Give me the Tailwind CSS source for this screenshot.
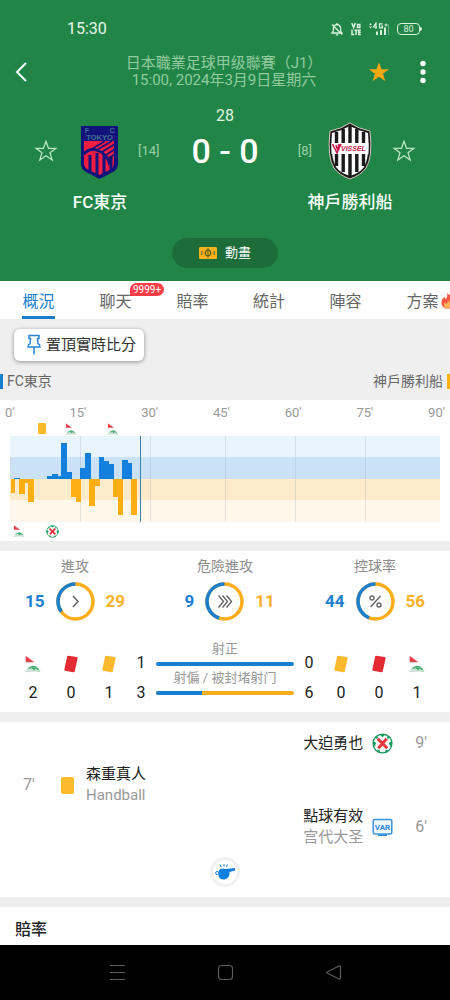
<!DOCTYPE html>
<html lang="zh-Hant">
<head>
<meta charset="utf-8">
<meta name="viewport" content="width=device-width, initial-scale=1">
<title>FC東京 - 神戶勝利船</title>
<script src="https://cdn.jsdelivr.net/npm/@tailwindcss/browser@4"></script>
</head>
<body class="flex min-h-screen flex-col bg-white font-['Roboto','Noto_Sans_CJK_TC',sans-serif] text-[#222]">

<!-- Shared icons -->
<svg width="0" height="0" class="absolute" aria-hidden="true">
  <symbol id="corner" viewBox="0 0 48 52">
    <path d="M2 1 28 21H2z" fill="#e3414c"/>
    <path d="M0 50 8 34 26 30 48 50z" fill="#dfe9e3"/>
    <path d="M9 42Q14 30 28 31q13 4 16 16l-12-7-6 6-5-7z" fill="#4fb27d"/>
    <path d="M2 50Q24 40 46 50" stroke="#9fd0b4" stroke-width="2" fill="none"/>
  </symbol>
  <symbol id="card" viewBox="0 0 13 17"><path d="M4 .8 12 2Q13 2.200 12.700 3.200L10 15.500Q9.700 16.400 8.700 16.200L.9 14.800Q0 14.600.2 13.700L2.800 1.600Q3 .7 4 .8z" fill="currentColor"/></symbol>
  <symbol id="miss" viewBox="0 0 20 20">
    <circle cx="10" cy="10" r="9" fill="#fff" stroke="#159a5c" stroke-width="1.200"/>
    <path d="M7 1.300h6L10 4zM1.200 7.500 4 9.500 2.600 13 1 11zM18.800 7.500 16 9.500l1.400 3.500L19 11zM4 16.500l3-.5 1 3zM16 16.500l-3-.5-1 3zM3 4l3-1-1 3zM17 4l-3-1 1 3z" fill="#159a5c"/>
    <path d="M5.500 5.500 14.500 14.500M14 5.500 6 14.500" stroke="#e5343c" stroke-width="2.800"/>
  </symbol>
  <symbol id="star" viewBox="0 0 24 24"><path d="M12 2.200 14.500 9.300H22L16 13.800 18.200 21 12 16.700 5.800 21 8 13.800 2 9.300H9.500z"/></symbol>
</svg>

<header class="bg-[#228548] text-white">
  <div class="flex h-[54px] items-center justify-between pt-1 pr-[28px] pl-[67px]">
    <span class="text-base leading-5 text-[#e6f8e9]">15:30</span>
    <div class="flex items-center gap-2 text-[#d9f2dd]">
      <svg class="h-3.5 w-3" viewBox="0 0 12 14" fill="none" stroke="currentColor" stroke-width="1.300"><path d="M1 11h10L9.600 9V6Q9.300 2.800 6 2.500 2.700 2.800 2.400 6v3zM6 2.500V1M4.800 12.800h2.400M1 2.500l10 10"/></svg>
      <svg class="h-3.5 w-2.5" viewBox="0 0 10 14" fill="none" stroke="currentColor" stroke-width="1.500" aria-label="VoLTE"><path d="M.8 1 2.600 5.500 4.400 1M6.500 2.500h2.300v3H6.500zM1 7.500V12.500H3.300M3.300 8.200H6.700M5 8.200V13M9.800 8.200H7.700v4.200h2.100M7.700 10.200h2"/></svg>
      <svg class="h-3.5 w-5" viewBox="0 0 20 14" fill="currentColor"><path d="M0 3 1.500 1 3 3zM0 4.500h3L1.500 6.500zM15.500 2.500h3v1h-3zM16.500 1.500h1v3h-1zM7 9.500h2V13H7zM11 8h2v5h-2zM15 5.500h2V13h-2z"/><path d="M7 7V1L4.500 5H8M13.500 1.800h-3v4h3V4H12" fill="none" stroke="currentColor" stroke-width="1.200"/><path d="M19.500 2v11" stroke="#76b58a" stroke-width=".8"/></svg>
      <span class="flex items-center"><span class="flex h-3 w-[23px] items-center justify-center rounded-[4px] border border-current text-[9px] leading-none">80</span><span class="h-1 w-0.5 rounded-r bg-current"></span></span>
    </div>
  </div>

  <div class="flex h-9 items-center justify-between pr-4 pl-3.5">
    <button type="button" aria-label="返回" class="w-20"><svg class="h-5 w-4" viewBox="0 0 16 20" fill="none" stroke="currentColor" stroke-width="2"><path d="M12 1 3 10l9 9"/></svg></button>
    <div class="text-center text-[15px] leading-[17px] whitespace-nowrap text-[#94cba0]"><h1 class="font-normal">日本職業足球甲级聯賽（J1）</h1><p>15:00, 2024年3月9日星期六</p></div>
    <div class="flex w-20 items-center justify-end gap-[21px]">
      <button type="button" aria-label="已收藏"><svg class="h-6 w-6 fill-[#fca90f]"><use href="#star"/></svg></button>
      <button type="button" aria-label="更多"><svg class="h-6 w-[22px]" viewBox="0 0 22 24" fill="currentColor"><circle cx="11" cy="3.500" r="2.700"/><circle cx="11" cy="12" r="2.700"/><circle cx="11" cy="20.500" r="2.700"/></svg></button>
    </div>
  </div>

  <p class="pt-5 text-center text-base leading-3 text-[#e2f5e5]">28</p>
  <div class="grid grid-cols-[minmax(0,4fr)_minmax(0,1fr)_minmax(0,4fr)] items-center">
    <div class="grid grid-cols-[1fr_44px_1fr] items-center gap-4">
      <button type="button" aria-label="收藏 FC東京" class="justify-self-end pr-1"><svg class="h-6 w-6 fill-none stroke-[#bfe8c5] stroke-[1.200]"><use href="#star"/></svg></button>
      <svg class="h-[58px] w-11" viewBox="0 0 44 58" aria-label="FC TOKYO">
        <path d="M3 4h37v38q0 5-5 8l-13.500 7L8 50q-5-3-5-8z" fill="#12127c"/>
        <path d="M6 19h30v22q0 4-3 6l-11.500 6L9 47q-3-2-3-6z" fill="#f21e42"/>
        <path d="M14 27 27 19M19 28 34 19M24 30 37 22M28 33 37 27M31 36 37 32" stroke="#12127c" stroke-width="1.700"/>
        <path d="M6 32Q12 25 21 29t11 14M12 33v18M19 31v23M26 33v19M33 35v13" stroke="#12127c" stroke-width="3" fill="none"/>
        <g fill="#3f7293" font-family="Liberation Sans, sans-serif" font-weight="700" text-anchor="middle"><text x="9" y="11" font-size="7">F</text><text x="34" y="11" font-size="7">C</text><text x="21.500" y="18" font-size="7.500">TOKYO</text></g>
      </svg>
      <span class="text-[13px] text-[#9bcfa6]">[14]</span>
    </div>
    <p class="flex justify-center text-[34px] leading-[58px] font-medium whitespace-nowrap">0 - 0</p>
    <div class="grid grid-cols-[1fr_44px_1fr] items-center gap-4">
      <span class="justify-self-end text-[13px] text-[#9bcfa6]">[8]</span>
      <svg class="h-[58px] w-11" viewBox="0 0 44 58" aria-label="VISSEL">
        <path d="M22 1Q31 7 42 9q3 26-4 37-5 7-16 11Q11 53 6 46-1 35 2 9 13 7 22 1z" fill="#1a1a1a" stroke="#d8c6bd"/>
        <path d="M22 4Q31 9 40 11q2 23-4 34-4 6-14 9Q12 51 8 45 2 34 4 11 13 9 22 4z" fill="#fff"/>
        <path d="M8.500 10v34M15.200 7v43M22 4v50M28.800 7v43M35.500 10v34" stroke="#1a1a1a" stroke-width="3.400"/>
        <path d="M3.500 21h37v11h-37z" fill="#fff"/>
        <path d="M4.500 22 9 31 13 22M8 23l2 6 1-7" fill="none" stroke="#c5174b" stroke-width="1.600"/>
        <text x="13" y="29" font-family="Liberation Sans, sans-serif" font-size="7" font-weight="700" font-style="italic" fill="#c5174b">VISSEL</text>
      </svg>
      <button type="button" aria-label="收藏 神戶勝利船" class="justify-self-start pl-1"><svg class="h-6 w-6 fill-none stroke-[#bfe8c5] stroke-[1.200]"><use href="#star"/></svg></button>
    </div>
  </div>
  <div class="grid grid-cols-[4fr_1fr_4fr] pt-2 text-center text-[17px] leading-7 font-medium"><h2>FC東京</h2><span></span><h2>神戶勝利船</h2></div>
  <div class="flex justify-center pt-[22px] pb-[13px]">
    <button type="button" class="flex h-[30px] w-[106px] items-center justify-center gap-2 rounded-full bg-[#1d6d3b] text-[13px]">
      <svg class="h-3.5 w-[18px]" viewBox="0 0 18 14"><rect y="1" width="18" height="12" rx="1" fill="#fcb01a"/><path d="M9 2v10M2.800 5v4M15.200 5v4" stroke="#59631d"/><circle cx="9" cy="7" r="2.800" fill="none" stroke="#59631d" stroke-width="1.200"/></svg>動畫
    </button>
  </div>
</header>

<main class="flex-1 bg-[#efefef]">
  <nav class="flex h-[38px] overflow-hidden bg-white text-base text-[#666]">
    <button type="button" class="flex w-[77px] shrink-0 flex-col items-center justify-between pt-[9px] text-[#1d80cf]"><span class="leading-6">概況</span><span class="h-[3px] w-[33px] bg-[#1d80cf]"></span></button>
    <button type="button" class="relative w-[77px] shrink-0 pt-[3px]">聊天<span class="absolute top-0.5 left-[53px] rounded-full rounded-bl-none bg-[#fd3e49] px-[3px] text-[10px] leading-[13px] text-white">9999+</span></button>
    <button type="button" class="w-[77px] shrink-0 pt-[3px]">賠率</button>
    <button type="button" class="w-[76px] shrink-0 pt-[3px]">統計</button>
    <button type="button" class="w-[77px] shrink-0 pt-[3px]">陣容</button>
    <button type="button" class="relative w-[77px] shrink-0 pt-[3px]">方案<svg class="absolute top-3 left-[57px] h-4 w-3.5" viewBox="0 0 14 16"><path d="M6 0q5 3 4 6l1.500-2Q14 7 14 10t-3 5.500H4Q0 13 .5 9T4 4q0 2 1 2 2-3 1-6z" fill="#f4553d"/><path d="M7 7q4 4 3 6.500T4 15Q1.500 12 4 9l1 2q2-1 2-4z" fill="#ffb257"/></svg></button>
  </nav>

  <div class="px-3.5 pt-2.5 pb-2">
    <button type="button" class="flex h-8 items-center gap-1 rounded-md bg-white pr-2 pl-3 text-[15px] text-[#333] shadow-[0_1px_4px_rgba(0,0,0,0.4)]">
      <svg class="h-[22px] w-4 shrink-0" viewBox="0 0 16 22" fill="none" stroke="#2d84d2" stroke-width="1.500"><path d="M3 1.500h10v3h-1.500l.5 5q2 1 2 3.500H2q0-2.500 2-3.500l.5-5H3zM8 13v7.500"/></svg>置頂實時比分
    </button>
  </div>
  <div class="flex h-6 items-center justify-between text-sm text-[#666]">
    <span class="flex items-center gap-1"><i class="h-[15px] w-[3px] bg-[#187ed0]"></i>FC東京</span>
    <span class="flex items-center gap-1">神戶勝利船<i class="h-[15px] w-[3px] bg-[#fdb010]"></i></span>
  </div>

  <section class="mt-[7px] bg-white pb-px">
    <div class="flex justify-between px-[5px] pt-1 text-[13px] leading-[17px] text-[#999]"><span>0'</span><span>15'</span><span>30'</span><span>45'</span><span>60'</span><span>75'</span><span>90'</span></div>
    <div class="flex h-[15px] items-center pl-[38px]"><i class="h-[11px] w-2 rounded-[1px] bg-[#fdba2d]"></i><svg class="ml-[19px] h-3 w-3"><use href="#corner"/></svg><svg class="ml-[30px] h-3 w-3"><use href="#corner"/></svg></div>
    <div class="px-2.5">
      <svg class="block h-[86px] w-full" viewBox="28 108 1292 258" preserveAspectRatio="none" shape-rendering="crispEdges">
        <path d="M28 108H1320v64H28z" fill="#e9f5fc"/><path d="M28 172H1320v65H28z" fill="#cbe2f6"/><path d="M28 237H1320v64H28z" fill="#fdebcb"/><path d="M28 301H1320v65H28z" fill="#fff7e9"/>
        <path d="M237 108h3v258h-3zM449 108h3v258h-3zM673 108h3v258h-3zM884 108h3v258h-3zM1095 108h3v258h-3z" fill="#8aa0b0" fill-opacity=".25"/>
        <path d="M41 237v-4h18v4zM140 237v-8h14v-7h18v6h10v-99h17v87h14v21zM238 237v-33h14v-45h18v78zM294 237v-65h17v11h14v10h15v44zM365 237v-58h17v10h14v48z" fill="#1480de"/>
        <path d="M30 237v42h14v-42zM55 237v45h17v-32h11v57h18v-70zM210 237v53h15v15h16v-68zM266 237v80h17v-60h15v-20zM337 237v54h14v54h17v-108zM393 237v108h17v-108z" fill="#fdae13"/>
        <path d="M420 108h3v258h-3z" fill="#3e7fad"/>
      </svg>
    </div>
    <div class="flex h-[18px] items-center pl-[13px]"><svg class="h-3 w-3"><use href="#corner"/></svg><svg class="ml-[21px] h-[13px] w-[13px]"><use href="#miss"/></svg></div>
  </section>

  <section class="mt-2.5 bg-white pt-[5px] pb-[7px]">
    <div class="grid grid-cols-3 text-center text-[17px] font-bold">
      <div><h3 class="text-sm leading-5 font-normal text-[#8c8c8c]">進攻</h3>
        <div class="mt-1.5 flex items-center justify-center gap-[11px]"><span class="text-[#1d7fd0]">15</span>
          <svg class="size-[39px]" viewBox="0 0 39 39" fill="none"><g stroke-width="3.500" transform="rotate(-90 19.500 19.500)"><circle cx="19.500" cy="19.500" r="17.500" stroke="#fbae1c"/><circle cx="19.500" cy="19.500" r="17.500" stroke="#1d7fcb" pathLength="100" stroke-dasharray="35 65" stroke-dashoffset="35"/></g><path d="M17 14l5 5.500-5 5.500" stroke="#666" stroke-width="1.500"/></svg>
          <span class="text-[#fbb02a]">29</span></div></div>
      <div><h3 class="text-sm leading-5 font-normal text-[#8c8c8c]">危險進攻</h3>
        <div class="mt-1.5 flex items-center justify-center gap-[11px]"><span class="w-[19px] text-right text-[#1d7fd0]">9</span>
          <svg class="size-[39px]" viewBox="0 0 39 39" fill="none"><g stroke-width="3.500" transform="rotate(-90 19.500 19.500)"><circle cx="19.500" cy="19.500" r="17.500" stroke="#fbae1c"/><circle cx="19.500" cy="19.500" r="17.500" stroke="#1d7fcb" pathLength="100" stroke-dasharray="45 55" stroke-dashoffset="45"/></g><path d="M13.500 13.500l5 6-5 6M17.500 13.500l5 6-5 6M21.500 13.500l5 6-5 6" stroke="#666" stroke-width="1.400"/></svg>
          <span class="text-[#fbb02a]">11</span></div></div>
      <div><h3 class="text-sm leading-5 font-normal text-[#8c8c8c]">控球率</h3>
        <div class="mt-1.5 flex items-center justify-center gap-[11px]"><span class="text-[#1d7fd0]">44</span>
          <svg class="size-[39px]" viewBox="0 0 39 39" fill="none"><g stroke-width="3.500" transform="rotate(-90 19.500 19.500)"><circle cx="19.500" cy="19.500" r="17.500" stroke="#fbae1c"/><circle cx="19.500" cy="19.500" r="17.500" stroke="#1d7fcb" pathLength="100" stroke-dasharray="44 56" stroke-dashoffset="44"/></g><g stroke="#666" stroke-width="1.400"><path d="M24.500 14 14.500 25"/><circle cx="16" cy="16" r="2"/><circle cx="23" cy="23" r="2"/></g></svg>
          <span class="text-[#fbb02a]">56</span></div></div>
    </div>

    <div class="mt-[18px] grid grid-cols-[38px_38px_38px_26px_minmax(0,1fr)_26px_38px_38px_38px] px-3.5 text-center text-base">
      <div class="flex flex-col items-center"><svg class="mt-4 h-[18px] w-4"><use href="#corner"/></svg><span class="mt-2 leading-6">2</span></div>
      <div class="flex flex-col items-center"><svg class="mt-4 h-[18px] w-[14px] text-[#e42a33]"><use href="#card"/></svg><span class="mt-2 leading-6">0</span></div>
      <div class="flex flex-col items-center"><svg class="mt-4 h-[18px] w-[14px] text-[#fcb92e]"><use href="#card"/></svg><span class="mt-2 leading-6">1</span></div>
      <div class="flex flex-col pt-3"><span class="leading-6">1</span><span class="mt-1.5 leading-6">3</span></div>
      <div class="px-0.5 text-[13px] leading-[18px] text-[#999]">
        <p class="pt-px">射正</p><div class="mt-1 h-1 rounded-full bg-[#187fd0]"></div>
        <p class="mt-[3px] whitespace-nowrap">射偏 / 被封堵射门</p><div class="mt-1 flex h-1 overflow-hidden rounded-full bg-[#fbae1c]"><i class="w-1/3 bg-[#187fd0]"></i></div>
      </div>
      <div class="flex flex-col pt-3"><span class="leading-6">0</span><span class="mt-1.5 leading-6">6</span></div>
      <div class="flex flex-col items-center"><svg class="mt-4 h-[18px] w-[14px] text-[#fcb92e]"><use href="#card"/></svg><span class="mt-2 leading-6">0</span></div>
      <div class="flex flex-col items-center"><svg class="mt-4 h-[18px] w-[14px] text-[#e42a33]"><use href="#card"/></svg><span class="mt-2 leading-6">0</span></div>
      <div class="flex flex-col items-center"><svg class="mt-4 h-[18px] w-4"><use href="#corner"/></svg><span class="mt-2 leading-6">1</span></div>
    </div>
  </section>

  <section class="mt-2.5 bg-white pb-2.5 text-[15px] leading-[21px]">
    <ul>
      <li class="flex h-[42px] items-center justify-end pr-[23px]"><span>大迫勇也</span><svg class="ml-[9px] size-[21px]"><use href="#miss"/></svg><time class="ml-[22px] text-base text-[#999]">9'</time></li>
      <li class="flex items-center pl-[23px]"><time class="w-[38px] text-base text-[#999]">7'</time><i class="h-[17px] w-[13px] rounded-[2px] bg-[#fdba2d]"></i><p class="ml-3">森重真人<br><span class="text-[#999]">Handball</span></p></li>
      <li class="flex items-center justify-end pr-[23px]"><p>點球有效<br><span class="text-[#999]">宫代大圣</span></p>
        <svg class="ml-[9px] size-[21px]" viewBox="0 0 21 21" aria-label="VAR"><rect x="1.200" y="2.500" width="18.600" height="14.500" rx="1.500" fill="#eef8ff" stroke="#3f92dc" stroke-width="1.500"/><path d="M6 17.500h9v1.500H6z" fill="#2f86d6"/><text x="10.500" y="12.800" text-anchor="middle" font-family="Roboto, sans-serif" font-size="8" font-weight="700" fill="#2f86d6">VAR</text></svg>
        <time class="ml-[22px] text-base text-[#999]">6'</time></li>
    </ul>
    <div class="mt-[9px] flex justify-center">
      <span class="flex size-[30px] items-center justify-center rounded-full border-[3px] border-[#f1f1f1] bg-white"><svg class="h-4 w-5" viewBox="0 0 20 16"><path d="M4 6Q7 3.500 10.500 5L20 4v2.500L14.500 8q.5 6-5 7.500Q5 16 3.500 12z" fill="#0e7fe2"/><circle cx="2.300" cy="9" r="1.600" fill="none" stroke="#0e7fe2"/><path d="M5 .5 6.200 3M9 0v2.500M12.500.5 11.500 3" stroke="#0e7fe2"/></svg></span>
    </div>
  </section>

  <section class="mt-2.5 bg-white px-[15px] pt-[15px] pb-[7px]"><h2 class="text-base leading-4 font-medium">賠率</h2></section>
</main>

<footer class="flex h-[55px] items-center justify-center gap-[91px] bg-black text-[#5c5c5c]">
  <button type="button" aria-label="最近使用"><svg class="size-[17px]" viewBox="0 0 17 17" stroke="currentColor"><path d="M1 1.500h15M1 8.500h15M1 15.500h15"/></svg></button>
  <button type="button" aria-label="主畫面"><svg class="size-[17px]" viewBox="0 0 17 17" fill="none" stroke="currentColor" stroke-width="1.200"><rect x="1.500" y="1.500" width="14" height="14" rx="3"/></svg></button>
  <button type="button" aria-label="返回上頁"><svg class="size-[17px]" viewBox="0 0 17 17" fill="none" stroke="currentColor" stroke-width="1.200"><path d="M14 2Q15.500 1.500 15.500 3v11q0 1.500-1.500 1L2 9Q1.200 8.500 2 8z"/></svg></button>
</footer>
</body>
</html>
